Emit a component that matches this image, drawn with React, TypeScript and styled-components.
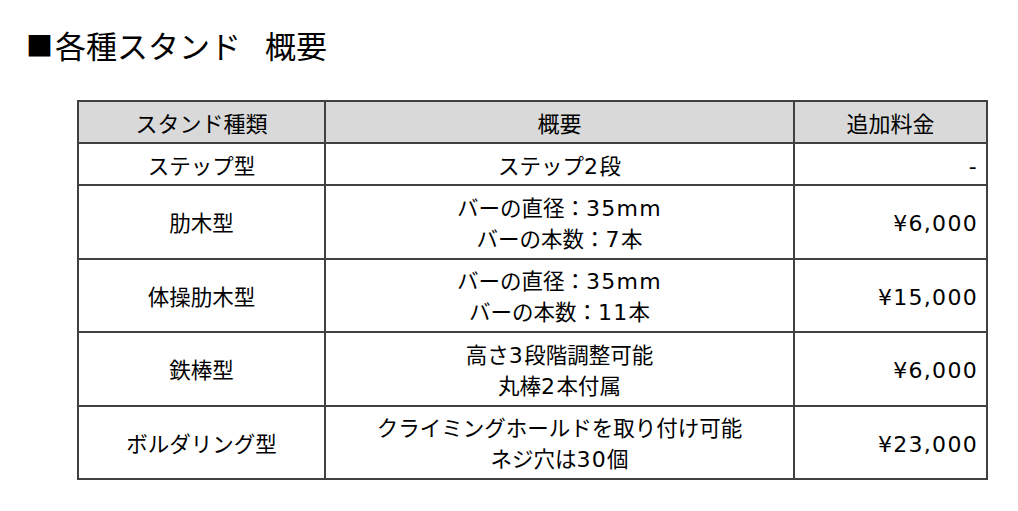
import * as React from 'react';
import styled, { createGlobalStyle } from 'styled-components';

const GlobalStyle = createGlobalStyle`
  html, body {
    margin: 0;
    padding: 0;
    background: #ffffff;
  }
  body {
    font-family: "Noto Sans CJK JP", "Noto Sans", sans-serif;
    color: #000000;
  }
`;

interface StandRow {
  name: string;
  summary: string[];
  price: string;
  tall?: boolean;
}

const rows: StandRow[] = [
  { name: 'ステップ型', summary: ['ステップ2段'], price: '-' },
  { name: '肋木型', summary: ['バーの直径：35mm', 'バーの本数：7本'], price: '¥6,000', tall: true },
  { name: '体操肋木型', summary: ['バーの直径：35mm', 'バーの本数：11本'], price: '¥15,000', tall: true },
  { name: '鉄棒型', summary: ['高さ3段階調整可能', '丸棒2本付属'], price: '¥6,000', tall: true },
  { name: 'ボルダリング型', summary: ['クライミングホールドを取り付け可能', 'ネジ穴は30個'], price: '¥23,000', tall: true },
];

// latin runs get a wider, Verdana-like face like the original deck
function Mixed({ text }: { text: string }) {
  const parts = text.split(/([0-9A-Za-z¥,\-]+)/);
  return (
    <>
      {parts.map((p, i) =>
        i % 2 === 1 ? <Latin key={i}>{p}</Latin> : <React.Fragment key={i}>{p}</React.Fragment>
      )}
    </>
  );
}

export default function App() {
  return (
    <>
      <GlobalStyle />
      <Page>
        <Title>
          <Bullet>■</Bullet>
          各種スタンド<TitleGap />概要
        </Title>
        <Table>
          <colgroup>
            <col style={{ width: 247 }} />
            <col style={{ width: 469 }} />
            <col style={{ width: 193 }} />
          </colgroup>
          <thead>
            <tr>
              <HeadCell>スタンド種類</HeadCell>
              <HeadCell>概要</HeadCell>
              <HeadCell>追加料金</HeadCell>
            </tr>
          </thead>
          <tbody>
            {rows.map(row => (
              <Row key={row.name} $tall={row.tall}>
                <Cell>{row.name}</Cell>
                <Cell>
                  {row.summary.map(line => (
                    <Line key={line}>
                      <Mixed text={line} />
                    </Line>
                  ))}
                </Cell>
                <PriceCell>
                  <Mixed text={row.price} />
                </PriceCell>
              </Row>
            ))}
          </tbody>
        </Table>
      </Page>
    </>
  );
}

const Page = styled.div`
  width: 1018px;
  height: 511px;
  padding: 24px 0 0 26px;
  box-sizing: border-box;
`;

const Title = styled.h1`
  margin: 0;
  display: flex;
  align-items: center;
  font-size: 31px;
  font-weight: 400;
  line-height: 42px;
  height: 42px;
`;

const Bullet = styled.span`
  font-size: 27px;
  margin-right: 2px;
`;

const TitleGap = styled.span`
  display: inline-block;
  width: 24px;
`;

const Table = styled.table`
  margin: 34px 0 0 51px;
  border-collapse: collapse;
  table-layout: fixed;
  width: 909px;
  font-size: 21.5px;
`;

const HeadCell = styled.th`
  height: 40px;
  padding: 0;
  border: 2px solid #404040;
  background: #d9d9d9;
  font-weight: 400;
  font-size: 22px;
  text-align: center;
  vertical-align: middle;
  line-height: 1.2;
`;

const Row = styled.tr<{ $tall?: boolean }>`
  height: ${p => (p.$tall ? '73.5px' : '42px')};
`;

const Cell = styled.td`
  padding: 0;
  border: 2px solid #404040;
  text-align: center;
  vertical-align: middle;
  line-height: 31px;
`;

const PriceCell = styled(Cell)`
  text-align: right;
  padding-right: 8px;
`;

const Latin = styled.span`
  font-family: "DejaVu Sans", "Noto Sans CJK JP", sans-serif;
  font-size: 22px;
  line-height: 1;
  letter-spacing: 1.3px;
`;

const Line = styled.div`
  white-space: nowrap;
  height: 31px;
  line-height: 31px;
`;
